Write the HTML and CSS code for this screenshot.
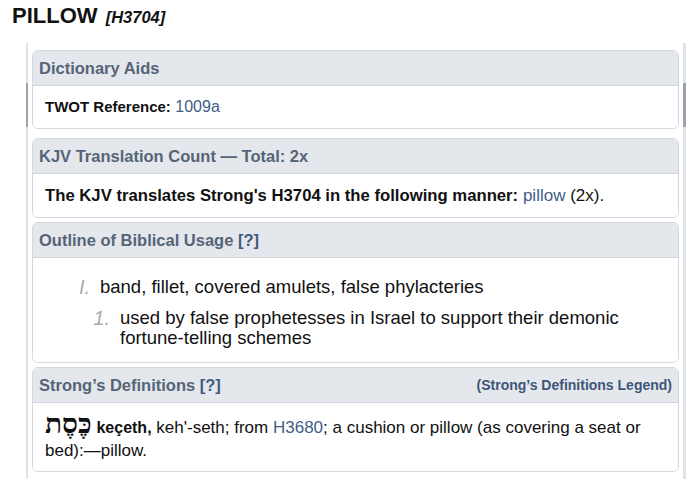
FILE: index.html
```html
<!DOCTYPE html>
<html>
<head>
<meta charset="utf-8">
<link rel="stylesheet" href="styles.css">
</head>
<body>
<h1 class="title">PILLOW <span class="num">[H3704]</span></h1>
<div class="frame">
  <section class="panel p1">
    <div class="phead">Dictionary Aids</div>
    <div class="pbody"><b>TWOT Reference:</b> <a class="lnk">1009a</a></div>
  </section>
  <section class="panel p2">
    <div class="phead">KJV Translation Count — Total: 2x</div>
    <div class="pbody"><b>The KJV translates Strong's H3704 in the following manner:</b> <a class="lnk">pillow</a> (2x).</div>
  </section>
  <section class="panel p3">
    <div class="phead">Outline of Biblical Usage&nbsp;<a class="hq">[?]</a></div>
    <div class="pbody outline">
      <div class="item lvl1"><span class="mark">I.</span><span>band, fillet, covered amulets, false phylacteries</span></div>
      <div class="item lvl2"><span class="mark">1.</span><span>used by false prophetesses in Israel to support their demonic fortune-telling schemes</span></div>
    </div>
  </section>
  <section class="panel p4">
    <div class="phead split"><span>Strong’s Definitions <a class="hq">[?]</a></span><a class="legend">(Strong’s Definitions Legend)</a></div>
    <div class="pbody def"><span class="heb" lang="he">כֶּסֶת</span> <b>keçeth,</b> <span>keh'-seth; from</span> <a class="lnk">H3680</a><span>; a cushion or pillow (as covering a seat or</span> <span>bed):—pillow.</span></div>
  </section>
</div>
</body>
</html>
```

FILE: styles.css
```css
html, body {
  margin: 0;
  padding: 0;
  background: #ffffff;
}
body {
  font-family: "Liberation Sans", Arial, sans-serif;
  color: #111;
}
.title {
  margin: 3px 0 0 12px;
  font-size: 22px;
  line-height: 26px;
  font-weight: bold;
  color: #111;
  height: 40px;
}
.title .num {
  font-size: 16.5px;
  font-style: italic;
  margin-left: 2px;
}
.frame {
  position: relative;
  margin-left: 26px;
  width: 647px;
  border-left: 2px solid #dfe2e6;
  border-right: 3px solid #dfe2e6;
  padding: 7px 4px 3px 4px;
}
.frame::before,
.frame::after {
  content: "";
  position: absolute;
  top: 40px;
  height: 44px;
  background: #9ba3ad;
}
.frame::before {
  left: -2px;
  width: 2px;
}
.frame::after {
  right: -3px;
  width: 3px;
}
.panel {
  border: 1px solid #d3d8de;
  border-radius: 6px;
  overflow: hidden;
  margin-bottom: 4px;
}
.panel.p1 { margin-bottom: 9px; }
.phead {
  height: 34px;
  background: #e4e8ed;
  border-bottom: 1px solid #d0d6dc;
  display: flex;
  align-items: center;
  padding: 0 6px;
  font-size: 16.5px;
  font-weight: bold;
  color: #566477;
}
.phead.split {
  justify-content: space-between;
}
.hq {
  color: #3e5a7e;
}
.legend {
  font-size: 14px;
  color: #3e5578;
}
.pbody {
  background: #fff;
  color: #111;
}
.lnk {
  color: #3f5e88;
}
.p1 .pbody {
  padding: 11px 12px 11px 12px;
  font-size: 16px;
  line-height: 20px;
}
.p1 .pbody b {
  font-size: 15px;
}
.p2 .pbody {
  padding: 12px 12px 11px 12px;
  font-size: 17px;
  line-height: 20px;
}
.p2 .pbody b {
  font-size: 16.7px;
}
.outline {
  padding: 19px 12px 14px 12px;
  font-size: 18.5px;
}
.item {
  display: flex;
  line-height: 20px;
}
.item .mark {
  font-style: italic;
  color: #a7acb1;
  text-align: right;
  margin-right: 10px;
  font-size: 20px;
  flex: none;
}
.lvl1 .mark { width: 45px; }
.lvl1 { margin-bottom: 11px; }
.lvl2 .mark { width: 65px; }
.def {
  padding: 9px 20px 9px 12px;
  line-height: 23px;
  font-size: 17px;
}
.def b {
  font-size: 16px;
}
.heb {
  font-family: "Liberation Serif", "DejaVu Serif", serif;
  font-weight: bold;
  font-size: 28px;
  line-height: 23px;
  color: #111;
}
```
